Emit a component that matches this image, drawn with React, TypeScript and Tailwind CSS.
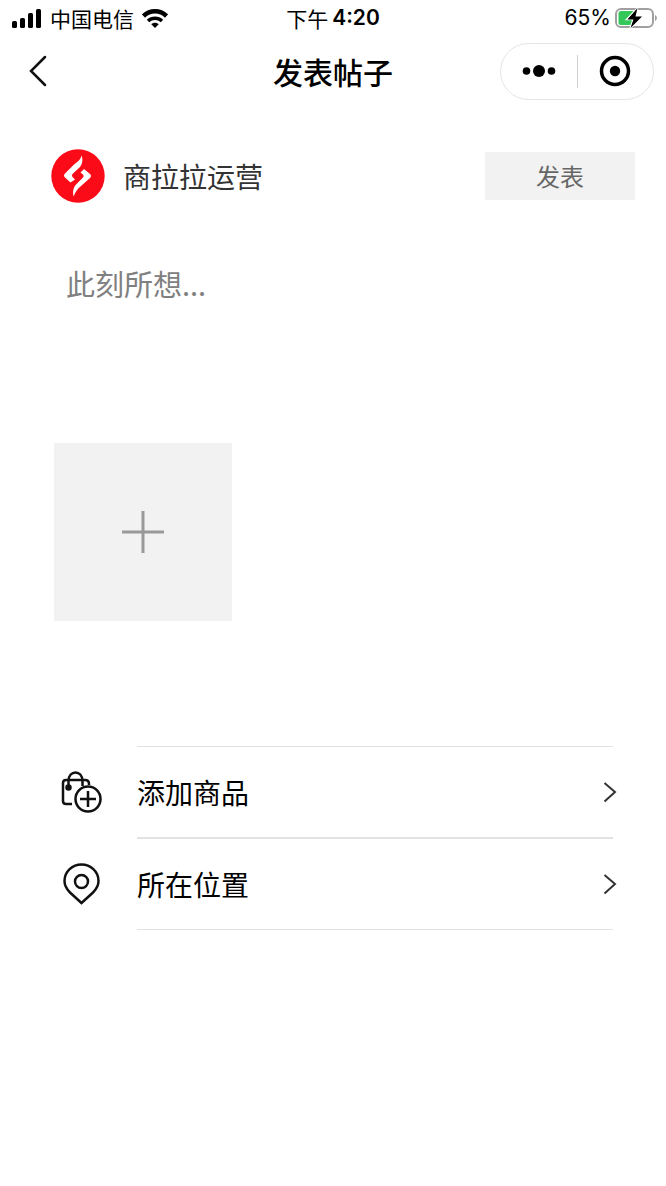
import { useState } from 'react';
import type { ReactNode } from 'react';

function SignalIcon() {
  return (
    <svg width="30" height="19" viewBox="0 0 30 19" aria-hidden="true">
      <rect x="0" y="12" width="5" height="7" rx="1.5" />
      <rect x="8" y="9" width="5" height="10" rx="1.5" />
      <rect x="16" y="4" width="5" height="15" rx="1.5" />
      <rect x="24" y="0" width="5" height="19" rx="1.5" />
    </svg>
  );
}

function WifiIcon() {
  return (
    <svg width="26" height="19" viewBox="0 0 26 19" fill="none" stroke="#000" aria-hidden="true">
      <path d="M1.5 7C8 .8 18 .8 24.5 7" strokeWidth="4.5" />
      <path d="M6 12C10 8.200 16 8.200 20 12" strokeWidth="3.500" />
      <path d="M9.300 15.200C11.500 13.200 14.500 13.200 16.700 15.200L13 19Z" fill="#000" stroke="none" />
    </svg>
  );
}

function BatteryIcon() {
  return (
    <svg width="43" height="22" viewBox="0 0 43 22" aria-hidden="true">
      <rect x="1" y="2" width="37" height="18" rx="5" fill="#fff" stroke="#a0a0a0" strokeWidth="2" />
      <path d="M40 8C42.500 9 42.500 13 40 14Z" fill="#a0a0a0" />
      <path d="M6 4H18V18H6Q3.500 18 3.500 15.500V6.500Q3.500 4 6 4Z" fill="#34c759" />
      <path d="M22.500 1L11.500 12.500H18L15 21.500L27.500 9.500H20.500Z" stroke="#fff" strokeWidth="1.500" />
      <path d="M22.500 1L12.500 12.500H18.500L15.500 21L27 9.500H20.500Z" />
    </svg>
  );
}

function ShopLogo() {
  return (
    <svg width="54" height="54" viewBox="0 0 54 54" aria-hidden="true">
      <circle cx="27" cy="27" r="26.700" fill="#fb0a17" />
      <path
        d="M30.700 6.500C32 11 31.500 15.500 28.500 18.500L21.500 25Q20.200 26.500 21.500 28L24 30.500L19.500 33.500L14 28.500Q12 26.500 14 24.500L22 16.500C26 13 29.500 11 30.700 6.500Z"
        fill="#fff"
      />
      <path
        d="M33 20L39 25Q41 27 39 29L30 37C26.500 40 24 43 22.700 47.500C21.300 42.500 22.500 38 25.500 35L32 28.500Q33.300 27 32 25.500L29.500 23.500Z"
        fill="#fff"
      />
    </svg>
  );
}

function BagPlusIcon() {
  return (
    <svg width="41" height="42" viewBox="0 0 41 42" fill="none" stroke="#111" strokeWidth="2.5" aria-hidden="true">
      <path d="M11 33H5Q2 33 2 30V12Q2 9 5 9H24Q28 9 28 13V14" />
      <path d="M7.500 16V10C7.500 -1.500 21.500 -1.500 21.500 10V15" />
      <circle cx="7.500" cy="16.500" r="2" fill="#111" />
      <circle cx="27" cy="28" r="12.500" />
      <path d="M27 20V36M19 28H35" />
    </svg>
  );
}

function PinIcon() {
  return (
    <svg width="41" height="42" viewBox="0 0 41 42" fill="none" stroke="#111" strokeWidth="2.5" aria-hidden="true">
      <path d="M20.500 40L9 29.500C5 25.500 3.500 22 3.500 18C3.500 8.500 11.500 1.500 20.500 1.500S37.500 8.500 37.500 18C37.500 22 36 25.500 32 29.500Z" />
      <circle cx="20.500" cy="18.500" r="6.500" />
    </svg>
  );
}

function OptionRow({ icon, label }: { icon: ReactNode; label: string }) {
  return (
    <button type="button" className="flex h-[90px] w-full items-center text-left cursor-pointer">
      <span className="w-[76px] shrink-0">{icon}</span>
      <span className="flex flex-1 items-center justify-between text-[28px] leading-10 text-black">
        {label}
        <svg className="-mr-1" width="14" height="22" viewBox="0 0 14 22" fill="none" stroke="#333" strokeWidth="2" aria-hidden="true">
          <path d="M1.500 2L12 11L1.500 20.500" />
        </svg>
      </span>
    </button>
  );
}

export default function App() {
  const [text, setText] = useState('');

  return (
    <div className="min-h-screen bg-white font-['Noto_Sans_CJK_SC',sans-serif] text-black">
      {/* Status bar */}
      <div className="grid h-9 grid-cols-[1fr_auto_1fr] items-center px-3 text-[21px] leading-6">
        <div className="flex items-center gap-2">
          <SignalIcon />
          <span>中国电信</span>
          <WifiIcon />
        </div>
        <div className="flex items-center gap-1">
          <span>下午</span>
          <span className="font-['Inter',sans-serif] font-semibold">4:20</span>
        </div>
        <div className="-mr-1 flex items-center justify-end gap-1">
          <span className="font-['Inter',sans-serif]">65%</span>
          <BatteryIcon />
        </div>
      </div>

      {/* Nav bar */}
      <header className="grid h-[70px] grid-cols-[1fr_auto_1fr] items-center px-3">
        <button type="button" aria-label="返回" className="ml-4 justify-self-start cursor-pointer">
          <svg width="20" height="32" viewBox="0 0 20 32" fill="none" stroke="#111" strokeWidth="2.500" strokeLinecap="round">
            <path d="M17 2L3 16L17 30" />
          </svg>
        </button>
        <h1 className="text-[30px] leading-10 font-medium">发表帖子</h1>
        <div className="flex h-[57px] w-[154px] items-center justify-self-end rounded-full border border-[#e5e5e5]">
          <button type="button" aria-label="更多" className="flex flex-1 justify-center cursor-pointer">
            <svg width="34" height="14" viewBox="0 0 34 14">
              <circle cx="4.500" cy="7" r="3.800" />
              <circle cx="17" cy="7" r="6" />
              <circle cx="29.500" cy="7" r="3.800" />
            </svg>
          </button>
          <div className="h-[33px] w-px bg-[#d0d0d0]" />
          <button type="button" aria-label="关闭" className="flex flex-1 justify-center cursor-pointer">
            <svg width="32" height="32" viewBox="0 0 32 32">
              <circle cx="16" cy="16" r="13.500" fill="none" stroke="#000" strokeWidth="3.500" />
              <circle cx="16" cy="16" r="5.200" />
            </svg>
          </button>
        </div>
      </header>

      <main>
        <div className="mt-[43px] flex items-center justify-between pr-[31px] pl-[51px]">
          <div className="flex items-center gap-[18px]">
            <ShopLogo />
            <span className="text-[28px] leading-10 text-[#333]">商拉拉运营</span>
          </div>
          <button type="button" className="h-12 w-[150px] bg-[#f2f2f2] text-[24px] text-[#666] cursor-pointer">
            发表
          </button>
        </div>

        <div className="mt-[60px] px-[66px]">
          <textarea
            aria-label="此刻所想"
            placeholder="此刻所想..."
            value={text}
            onChange={(e) => setText(e.target.value)}
            className="block h-[180px] w-full resize-none text-[29px] leading-10 outline-none placeholder:text-[#808080]"
          />
        </div>

        <div className="px-[54px]">
          <button type="button" aria-label="添加图片" className="flex size-[178px] items-center justify-center bg-[#f2f2f2] cursor-pointer">
            <svg width="42" height="42" viewBox="0 0 42 42" stroke="#999" strokeWidth="3">
              <path d="M21 0V42M0 21H42" />
            </svg>
          </button>
        </div>

        {/* Options */}
        <div className="mt-[125px] pr-[53px] pl-[61px]">
          <div className="ml-[76px] h-px bg-[#e2e2e2]" />
          <OptionRow icon={<BagPlusIcon />} label="添加商品" />
          <div className="ml-[76px] h-0.5 bg-[#e2e2e2]" />
          <OptionRow icon={<PinIcon />} label="所在位置" />
          <div className="ml-[76px] h-px bg-[#e2e2e2]" />
        </div>
      </main>
    </div>
  );
}
